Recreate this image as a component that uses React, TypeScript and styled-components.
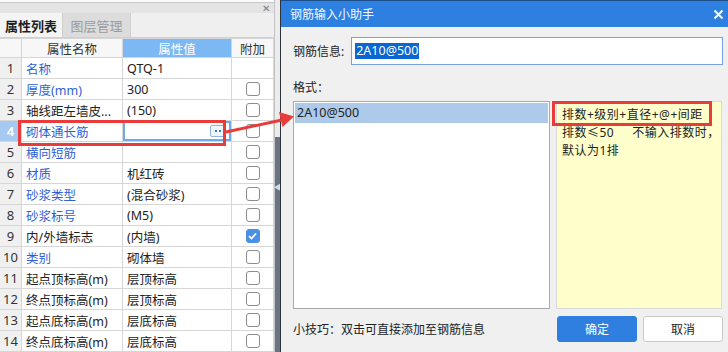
import React from "react";
import styled, { createGlobalStyle } from "styled-components";

const GlobalStyle = createGlobalStyle`
    html, body {
        margin: 0;
        padding: 0;
        background: #f0f0f0;
        overflow: hidden;
    }
    body {
        font-family: "Noto Sans", "Noto Sans CJK SC", sans-serif;
        font-size: 12px;
        color: #222;
    }
`;

const Screen = styled.div`
    position: relative;
    display: flex;
    width: 728px;
    height: 352px;
    overflow: hidden;
`;

/* ---------- left: property panel ---------- */

const LeftPanel = styled.div`
    position: relative;
    width: 274px;
    flex-shrink: 0;
    display: flex;
    flex-direction: column;
    background: #fff;
`;

const TopStrip = styled.div`
    height: 4px;
    background: #fafafa;
    border-bottom: 1px solid #c9c9c9;
`;

const PanelHead = styled.div`
    height: 10px;
    background: #e4e4e4;
    display: flex;
    justify-content: flex-end;
    align-items: center;
    padding-right: 4px;
    color: #7a7a7a;
    font-size: 10px;
    line-height: 10px;
`;

const TabRow = styled.div`
    height: 25px;
    display: flex;
    align-items: flex-end;
    background: #efefef;
    border-bottom: 1px solid #d0d0d0;
    box-sizing: border-box;
`;

const Tab = styled.div<{ $active?: boolean }>`
    height: 24px;
    display: flex;
    align-items: center;
    justify-content: center;
    width: ${(p) => (p.$active ? "62px" : "67px")};
    font-size: 13px;
    font-weight: ${(p) => (p.$active ? 600 : 400)};
    color: ${(p) => (p.$active ? "#1e1e1e" : "#9b9b9b")};
    background: ${(p) => (p.$active ? "#f4f4f4" : "#dcdcdc")};
    border-right: 1px solid #cfcfcf;
`;

const Table = styled.div`
    display: flex;
    flex-direction: column;
`;

const Row = styled.div<{ $head?: boolean }>`
    display: grid;
    grid-template-columns: 22px 101px 109px 42px;
    height: ${(p) => (p.$head ? "20px" : "21px")};
`;

const Cell = styled.div`
    display: flex;
    align-items: center;
    box-sizing: border-box;
    border-right: 1px solid #d6d6d6;
    border-bottom: 1px solid #d6d6d6;
    white-space: nowrap;
    overflow: hidden;
    font-size: 12.5px;
`;

const NumCell = styled(Cell)<{ $sel?: boolean }>`
    justify-content: center;
    font-size: 13px;
    background: ${(p) => (p.$sel ? "#a6c9f1" : "#f0f0f0")};
    color: ${(p) => (p.$sel ? "#fff" : "#333")};
    font-weight: ${(p) => (p.$sel ? 600 : 400)};
`;

const HeadCell = styled(Cell)<{ $blue?: boolean }>`
    justify-content: center;
    background: ${(p) => (p.$blue ? "#7bb8f4" : "#f7f7f7")};
    color: ${(p) => (p.$blue ? "#fff" : "#333")};
    border-top: 1px solid #d6d6d6;
`;

const NameCell = styled(Cell)<{ $blue?: boolean }>`
    padding-left: 4px;
    color: ${(p) => (p.$blue ? "#2f5fd3" : "#222")};
`;

const ValueCell = styled(Cell)<{ $edit?: boolean }>`
    padding-left: 4px;
    box-shadow: ${(p) => (p.$edit ? "inset 0 0 0 2px #6ea8ee" : "none")};
`;

const AddCell = styled(Cell)`
    justify-content: center;
`;

const MoreButton = styled.div`
    width: 14px;
    height: 10px;
    margin-left: auto;
    margin-right: 5px;
    border: 1px solid #8fb6e8;
    border-radius: 2px;
    background: #eef5fd;
    display: flex;
    align-items: center;
    justify-content: center;
    gap: 2px;
`;

const Dot = styled.span`
    width: 2px;
    height: 2px;
    background: #3a78d0;
`;

const Check = styled.div<{ $on?: boolean }>`
    width: 12px;
    height: 12px;
    border: 1px solid ${(p) => (p.$on ? "#4a90e6" : "#8c8c8c")};
    border-radius: 3px;
    background: ${(p) => (p.$on ? "#4a90e6" : "#fff")};
    display: flex;
    align-items: center;
    justify-content: center;
`;

const RedFrame = styled.div`
    position: absolute;
    left: 18px;
    top: 120px;
    width: 208px;
    height: 26px;
    box-sizing: border-box;
    border: 3px solid #ea3b3b;
    pointer-events: none;
`;

/* ---------- splitter ---------- */

const Splitter = styled.div`
    width: 6px;
    flex-shrink: 0;
    display: flex;
    flex-direction: column;
    background: #ececec;
    border-left: 1px solid #c4c4c4;
    box-sizing: border-box;
`;

const SplitterDark = styled.div`
    margin-top: 137px;
    flex: 1;
    background: #6b7480;
    display: flex;
    justify-content: center;
    padding-top: 45px;
    color: #d9dde2;
    font-size: 8px;
    line-height: 10px;
`;

/* ---------- dialog ---------- */

const Dialog = styled.div`
    flex: 1;
    display: flex;
    flex-direction: column;
    border-left: 1px solid #2b333d;
    background: #f0f0f0;
`;

const TitleBar = styled.div`
    height: 27px;
    background: #2d7fe0;
    border-top: 1px solid #1c4f8a;
    box-sizing: border-box;
    display: flex;
    align-items: center;
    justify-content: space-between;
    padding: 0 4px 0 9px;
    color: #f4f8ff;
    font-size: 12px;
`;

const Body = styled.div`
    flex: 1;
    display: flex;
    flex-direction: column;
    padding: 10px 5px 0 12px;
`;

const InfoRow = styled.div`
    display: flex;
    align-items: center;
    gap: 7px;
    height: 28px;
`;

const InputBox = styled.div`
    flex: 1;
    height: 28px;
    box-sizing: border-box;
    background: #fff;
    border: 1px solid #7a9fe0;
    display: flex;
    align-items: center;
    padding-left: 3px;
`;

const Selected = styled.span`
    background: #0a66d2;
    color: #fff;
    font-size: 12.5px;
    line-height: 16px;
    padding: 0 1px;
`;

const SectionLabel = styled.div`
    margin-top: 13px;
    height: 20px;
    line-height: 20px;
`;

const ContentRow = styled.div`
    display: flex;
    gap: 6px;
    margin-top: 3px;
    height: 208px;
`;

const ListBox = styled.div`
    width: 257px;
    box-sizing: border-box;
    background: #fff;
    border: 1px solid #a9a9a9;
    padding: 1px;
`;

const ListItem = styled.div<{ $sel?: boolean }>`
    height: 20px;
    line-height: 20px;
    padding-left: 2px;
    font-size: 12.5px;
    background: ${(p) => (p.$sel ? "#aecaea" : "transparent")};
`;

const Note = styled.div`
    position: relative;
    width: 166px;
    box-sizing: border-box;
    background: #ffffcc;
    border: 1px solid #dadada;
    padding: 4px 0 0 5px;
    line-height: 18px;
    letter-spacing: 0.5px;
    white-space: nowrap;
`;

const NoteFrame = styled.div`
    position: absolute;
    left: -5px;
    top: -1px;
    width: 160px;
    height: 25px;
    box-sizing: border-box;
    border: 3px solid #ea3b3b;
    pointer-events: none;
`;

const Footer = styled.div`
    display: flex;
    align-items: center;
    margin-top: 7px;
    height: 26px;
`;

const Tip = styled.div`
    flex: 1;
`;

const Button = styled.div<{ $primary?: boolean }>`
    width: 80px;
    height: 26px;
    box-sizing: border-box;
    border-radius: 3px;
    display: flex;
    align-items: center;
    justify-content: center;
    margin-left: 6px;
    background: ${(p) => (p.$primary ? "#2e7fe0" : "#fff")};
    color: ${(p) => (p.$primary ? "#fff" : "#222")};
    border: 1px solid ${(p) => (p.$primary ? "#2e7fe0" : "#c8c8c8")};
`;

const Arrow = styled.svg`
    position: absolute;
    left: 224px;
    top: 104px;
    pointer-events: none;
`;

type Prop = { no: number; name: string; value: string; blue?: boolean; check?: "none" | "off" | "on"; edit?: boolean };

const props: Prop[] = [
    { no: 1, name: "名称", value: "QTQ-1", blue: true, check: "none" },
    { no: 2, name: "厚度(mm)", value: "300", blue: true },
    { no: 3, name: "轴线距左墙皮...", value: "(150)" },
    { no: 4, name: "砌体通长筋", value: "", blue: true, edit: true },
    { no: 5, name: "横向短筋", value: "", blue: true },
    { no: 6, name: "材质", value: "机红砖", blue: true },
    { no: 7, name: "砂浆类型", value: "(混合砂浆)", blue: true },
    { no: 8, name: "砂浆标号", value: "(M5)", blue: true },
    { no: 9, name: "内/外墙标志", value: "(内墙)", check: "on" },
    { no: 10, name: "类别", value: "砌体墙", blue: true },
    { no: 11, name: "起点顶标高(m)", value: "层顶标高" },
    { no: 12, name: "终点顶标高(m)", value: "层顶标高" },
    { no: 13, name: "起点底标高(m)", value: "层底标高" },
    { no: 14, name: "终点底标高(m)", value: "层底标高" },
];

function PropertyPanel() {
    return (
        <LeftPanel>
            <TopStrip />
            <PanelHead>✕</PanelHead>
            <TabRow>
                <Tab $active>属性列表</Tab>
                <Tab>图层管理</Tab>
            </TabRow>
            <Table>
                <Row $head>
                    <HeadCell />
                    <HeadCell>属性名称</HeadCell>
                    <HeadCell $blue>属性值</HeadCell>
                    <HeadCell>附加</HeadCell>
                </Row>
                {props.map((p) => (
                    <Row key={p.no}>
                        <NumCell $sel={p.edit}>{p.no}</NumCell>
                        <NameCell $blue={p.blue}>{p.name}</NameCell>
                        <ValueCell $edit={p.edit}>
                            {p.value}
                            {p.edit && (
                                <MoreButton>
                                    <Dot />
                                    <Dot />
                                </MoreButton>
                            )}
                        </ValueCell>
                        <AddCell>
                            {p.check !== "none" && (
                                <Check $on={p.check === "on"}>
                                    {p.check === "on" && (
                                        <svg width="9" height="8" viewBox="0 0 9 8">
                                            <path d="M1 4.2 L3.5 6.5 L8 1.5" stroke="#fff" strokeWidth="1.8" fill="none" />
                                        </svg>
                                    )}
                                </Check>
                            )}
                        </AddCell>
                    </Row>
                ))}
            </Table>
            <RedFrame />
        </LeftPanel>
    );
}

function RebarDialog() {
    return (
        <Dialog>
            <TitleBar>
                <span>钢筋输入小助手</span>
                <svg width="11" height="11" viewBox="0 0 11 11">
                    <path d="M1.5 1.5 L9.5 9.5 M9.5 1.5 L1.5 9.5" stroke="#fff" strokeWidth="2" />
                </svg>
            </TitleBar>
            <Body>
                <InfoRow>
                    <span>钢筋信息:</span>
                    <InputBox>
                        <Selected>2A10@500</Selected>
                    </InputBox>
                </InfoRow>
                <SectionLabel>格式：</SectionLabel>
                <ContentRow>
                    <ListBox>
                        <ListItem $sel>2A10@500</ListItem>
                    </ListBox>
                    <Note>
                        排数+级别+直径+@+间距
                        <br />
                        排数≤50&nbsp;&nbsp;&nbsp;&nbsp;&nbsp;不输入排数时，
                        <br />
                        默认为1排
                        <NoteFrame />
                    </Note>
                </ContentRow>
                <Footer>
                    <Tip>小技巧：双击可直接添加至钢筋信息</Tip>
                    <Button $primary>确定</Button>
                    <Button>取消</Button>
                </Footer>
            </Body>
        </Dialog>
    );
}

export default function App() {
    return (
        <>
            <GlobalStyle />
            <Screen>
                <PropertyPanel />
                <Splitter>
                    <SplitterDark>◀</SplitterDark>
                </Splitter>
                <RebarDialog />
                <Arrow width="74" height="34" viewBox="0 0 74 34">
                    <line x1="2" y1="28" x2="58" y2="16" stroke="#ea3b3b" strokeWidth="3" />
                    <polygon points="70,12.5 55,8 58.5,23" fill="#ea3b3b" />
                </Arrow>
            </Screen>
        </>
    );
}
